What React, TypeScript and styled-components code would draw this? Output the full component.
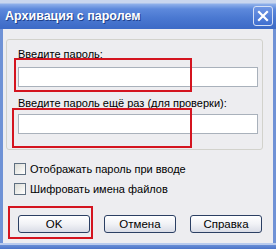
import React from "react";
import styled, { createGlobalStyle } from "styled-components";

const Global = createGlobalStyle`
  html, body { margin: 0; padding: 0; background: #ffffff; }
  body { font-family: "Liberation Sans", Arial, sans-serif; }
  * { box-sizing: border-box; }
`;

const Window = styled.div`
  position: relative;
  width: 276px;
  height: 249px;
  display: flex;
  flex-direction: column;
  background: #6f92d6;
  overflow: hidden;
`;

const TitleBar = styled.div`
  height: 29px;
  display: flex;
  align-items: center;
  justify-content: space-between;
  padding: 3px 3px 0 5px;
  background: linear-gradient(
    to bottom,
    #c9d6ee 0px,
    #c9d6ee 3px,
    #8fb0ea 4px,
    #5d89dc 9px,
    #4a78d1 18px,
    #3d6bc7 28px
  );
`;

const Title = styled.div`
  color: #ffffff;
  font-family: "Liberation Sans", Arial, sans-serif;
  font-weight: bold;
  font-size: 12.5px;
  text-shadow: 1px 1px 0 #1d3f8a;
`;

const CloseButton = styled.div`
  width: 20px;
  height: 20px;
  border: 1px solid #d5e0f5;
  border-radius: 3px;
  background: linear-gradient(to bottom, #6f96e4, #3f6fd0);
  display: flex;
  align-items: center;
  justify-content: center;
`;

const Body = styled.div`
  position: relative;
  flex: 1;
  margin: 0 3px;
  background: #ededf0;
  padding: 10px 10px 0 3px;
  display: flex;
  flex-direction: column;
  font-size: 11px;
  color: #000;
`;

const Group = styled.div`
  border: 1px solid #d2d2cc;
  border-radius: 3px;
  height: 111px;
  padding: 7px 4px 0 11px;
  display: flex;
  flex-direction: column;
`;

const Label = styled.div<{ $gap: number }>`
  height: 14px;
  line-height: 14px;
  margin-top: ${(p) => p.$gap}px;
  white-space: nowrap;
`;

const Input = styled.div<{ $gap: number }>`
  margin-top: ${(p) => p.$gap}px;
  width: 240px;
  height: 20px;
  background: #ffffff;
  border: 1px solid #a9b1bb;
`;

const CheckRow = styled.div<{ $gap: number }>`
  display: flex;
  align-items: center;
  gap: 4px;
  height: 16px;
  margin-top: ${(p) => p.$gap}px;
  padding-left: 8px;
  white-space: nowrap;
`;

const Box = styled.div`
  width: 12px;
  height: 12px;
  border: 1px solid #5f6f80;
  background: linear-gradient(135deg, #dcdcd6, #ffffff);
`;

const Buttons = styled.div`
  display: flex;
  gap: 14px;
  margin-top: 18px;
  padding-left: 12px;
`;

const Button = styled.div`
  width: 72px;
  height: 18px;
  border: 1px solid #2b3f63;
  border-radius: 3px;
  background: linear-gradient(to bottom, #ffffff 0%, #f1f2f6 50%, #d9dce6 100%);
  display: flex;
  align-items: center;
  justify-content: center;
  font-size: 11.5px;
`;

const BottomFrame = styled.div`
  height: 6px;
  background: linear-gradient(to bottom, #b9cbee 0, #b9cbee 2px, #6a8fd6 2px, #4b74c9 6px);
`;

const Mark = styled.div`
  position: absolute;
  border: 2px solid #d4141f;
`;

export default function App() {
  return (
    <>
      <Global />
      <Window>
        <TitleBar>
          <Title>Архивация с паролем</Title>
          <CloseButton>
            <svg width="12" height="12" viewBox="0 0 12 12">
              <path d="M2 2 L10 10 M10 2 L2 10" stroke="#ffffff" strokeWidth="2.2" strokeLinecap="square" />
            </svg>
          </CloseButton>
        </TitleBar>
        <Body>
          <Group>
            <Label $gap={0}>Введите пароль:</Label>
            <Input $gap={6} />
            <Label $gap={9}>Введите пароль ещё раз (для проверки):</Label>
            <Input $gap={4} />
          </Group>
          <CheckRow $gap={11}>
            <Box />
            <span>Отображать пароль при вводе</span>
          </CheckRow>
          <CheckRow $gap={4}>
            <Box />
            <span>Шифровать имена файлов</span>
          </CheckRow>
          <Buttons>
            <Button>OK</Button>
            <Button>Отмена</Button>
            <Button>Справка</Button>
          </Buttons>
        </Body>
        <BottomFrame />
        <Mark style={{ left: 14, top: 58, width: 178, height: 34 }} />
        <Mark style={{ left: 12, top: 108, width: 180, height: 40 }} />
        <Mark style={{ left: 8, top: 206, width: 85, height: 33 }} />
      </Window>
    </>
  );
}
